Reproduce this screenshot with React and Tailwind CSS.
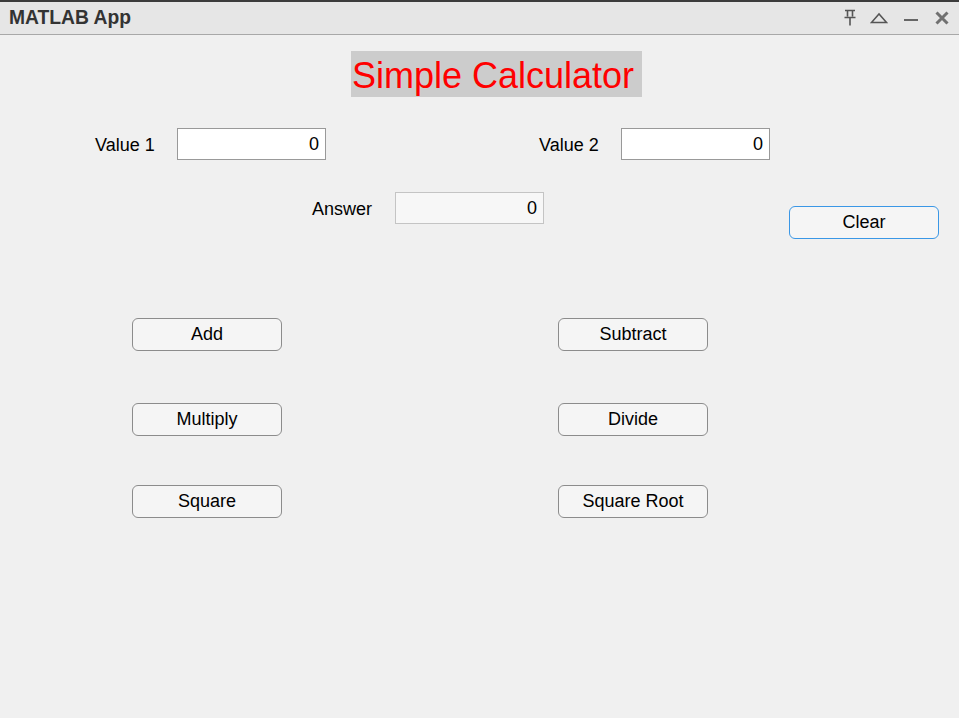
import React from "react";

const font = { fontFamily: '"Liberation Sans", Arial, sans-serif' };

function Field({ value, readOnly }) {
  return (
    <div
      className={`w-[149px] h-[32px] border flex items-center justify-end pr-[6px] text-[18px] text-black ${
        readOnly ? "bg-[#f7f7f7] border-[#c4c4c4]" : "bg-white border-[#999999]"
      }`}
    >
      {value}
    </div>
  );
}

function Btn({ children, blue }) {
  return (
    <div
      className={`w-[150px] h-[33px] rounded-[6px] border flex items-center justify-center text-[18px] text-black bg-[#f5f5f5] ${
        blue ? "border-[#3a97e6]" : "border-[#8c8c8c]"
      }`}
    >
      {children}
    </div>
  );
}

export default function App() {
  return (
    <div className="w-[959px] h-[718px] bg-[#f0f0f0] flex flex-col overflow-hidden" style={font}>
      <div className="h-[2px] bg-[#3c3c3c]" />
      <div className="h-[33px] bg-[#e6e6e6] border-b border-[#a8a8a8] flex items-center pl-[9px] pr-[10px]">
        <div className="text-[19.3px] font-bold text-[#333333] leading-none">MATLAB App</div>
        <div className="ml-auto flex items-center">
          <svg width="14" height="18" viewBox="0 0 14 18">
            <path d="M2 1.5h10M4.5 1.5v6M9.5 1.5v6M1.5 8.5h11M7 8.5v8" stroke="#555" strokeWidth="1.6" fill="none" />
          </svg>
          <svg width="18" height="12" viewBox="0 0 18 12" className="ml-[13px]">
            <path d="M1.5 10.5L9 2L16.5 10.5Z" stroke="#555" strokeWidth="1.5" fill="none" strokeLinejoin="miter" />
          </svg>
          <svg width="14" height="4" viewBox="0 0 14 4" className="ml-[16px] mt-[3px]">
            <path d="M0 2h14" stroke="#666" strokeWidth="2" />
          </svg>
          <svg width="14" height="14" viewBox="0 0 14 14" className="ml-[17px]">
            <path d="M1.5 1.5L12.5 12.5M12.5 1.5L1.5 12.5" stroke="#707070" strokeWidth="3" />
          </svg>
        </div>
      </div>

      <div className="mt-[16px] ml-[351px] w-[291px] h-[46px] bg-[#cccccc] flex items-center">
        <span className="text-[36px] text-[#ff0000] leading-none pl-[1px] pt-[3px]">Simple Calculator</span>
      </div>

      <div className="mt-[31px] flex items-center h-[32px]">
        <span className="ml-[95px] w-[82px] text-[18px] text-black pt-[2px]">Value 1</span>
        <Field value="0" />
        <span className="ml-[213px] w-[82px] text-[18px] text-black pt-[2px]">Value 2</span>
        <Field value="0" />
      </div>

      <div className="mt-[32px] flex items-start">
        <div className="flex items-center h-[32px]">
          <span className="ml-[312px] w-[83px] text-[18px] text-black pt-[2px]">Answer</span>
          <Field value="0" readOnly />
        </div>
        <div className="mt-[14px] ml-[245px]">
          <Btn blue>Clear</Btn>
        </div>
      </div>

      <div className="mt-[79px] flex flex-col gap-[52px] pl-[132px]">
        <div className="flex gap-[276px]">
          <Btn>Add</Btn>
          <Btn>Subtract</Btn>
        </div>
        <div className="flex gap-[276px]">
          <Btn>Multiply</Btn>
          <Btn>Divide</Btn>
        </div>
      </div>
      <div className="mt-[49px] flex gap-[276px] pl-[132px]">
        <Btn>Square</Btn>
        <Btn>Square Root</Btn>
      </div>
    </div>
  );
}
